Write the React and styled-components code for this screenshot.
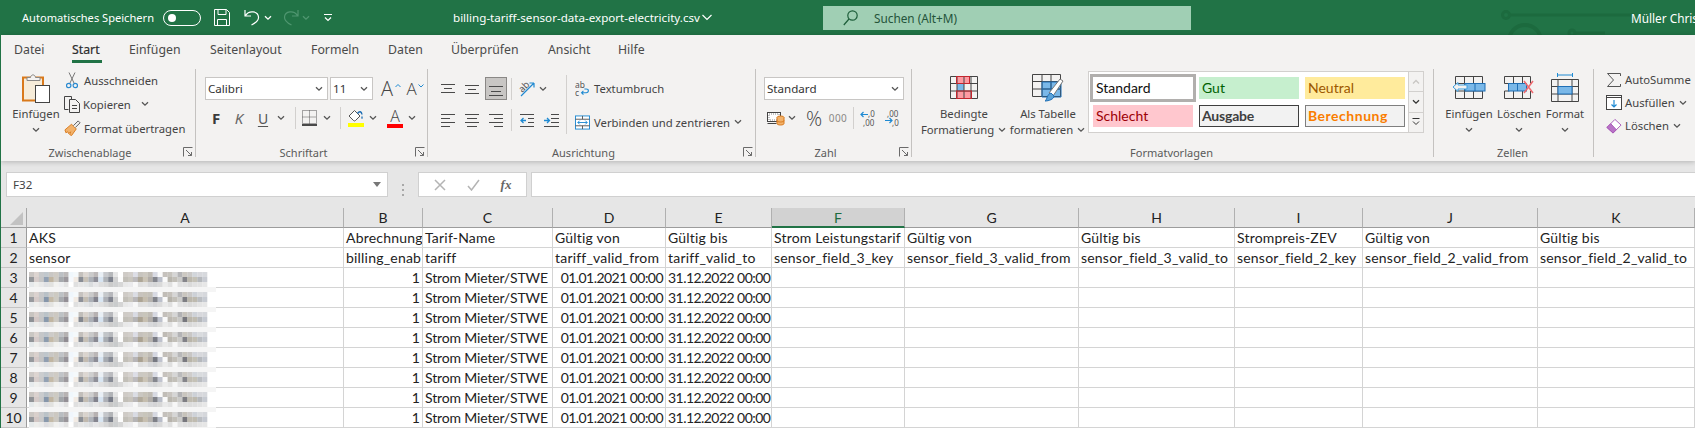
import React from "react";
import styled, { createGlobalStyle } from "styled-components";

const UI_FONT = `"Noto Sans", "Open Sans", sans-serif`;
const CELL_FONT = `Lato, "Liberation Sans", sans-serif`;

const Global = createGlobalStyle`
  html, body { margin: 0; padding: 0; background: #e6e6e6; }
  * { box-sizing: border-box; }
`;

const Page = styled.div`
  width: 1695px;
  height: 428px;
  overflow: hidden;
  border-left: 1px solid #217346;
  font-family: ${UI_FONT};
  font-size: 12px;
  color: #444;
  position: relative;
`;

/* ---------- title bar ---------- */
const TitleBar = styled.div`
  height: 35px;
  margin-left: -1px;
  background: #217346;
  color: #fff;
  display: flex;
  align-items: center;
  position: relative;
  overflow: hidden;
`;
const TitleSlot = styled.div`
  flex: none;
  display: flex;
  align-items: center;
  justify-content: center;
  width: ${(p) => p.$w}px;
  margin-left: ${(p) => p.$ml || 0}px;
`;
const AutoSave = styled.span`
  flex: none;
  width: 134px;
  margin-left: 22px;
  white-space: nowrap;
  font-size: 11.1px;
`;
const Toggle = styled.div`
  flex: none;
  width: 38px;
  height: 16px;
  margin-left: 7px;
  border: 1px solid #fff;
  border-radius: 8px;
  display: flex;
  align-items: center;
  padding-left: 4px;
`;
const Knob = styled.span`
  width: 8px;
  height: 8px;
  border-radius: 50%;
  background: #fff;
`;
const FileName = styled.span`
  flex: none;
  width: 245px;
  margin-left: 120px;
  white-space: nowrap;
  font-size: 11.6px;
`;
const SearchBox = styled.div`
  flex: none;
  width: 368px;
  height: 24px;
  margin-left: 111px;
  background: #a0cfb4;
  color: #24543a;
  display: flex;
  align-items: center;
  gap: 16px;
  padding-left: 20px;
  font-size: 11.8px;
  position: relative;
`;
const UserName = styled.span`
  flex: none;
  margin-left: 440px;
  white-space: nowrap;
  font-size: 11.8px;
  position: relative;
`;
const Circuit = styled.svg`
  position: absolute;
  left: 1495px;
  top: 0;
`;

/* ---------- ribbon ---------- */
const Ribbon = styled.div`
  height: 126px;
  background: #f3f2f1;
  box-shadow: 0 1px 5px rgba(0, 0, 0, 0.22);
  position: relative;
  z-index: 2;
`;
const TabBar = styled.div`
  height: 28px;
  display: flex;
  padding-left: 13px;
`;
const Tab = styled.div`
  flex: none;
  width: ${(p) => p.$w}px;
  height: 28px;
  line-height: 30px;
  font-size: 12.3px;
  color: ${(p) => (p.$active ? "#2d2d2d" : "#4a4a4a")};
  -webkit-text-stroke: ${(p) => (p.$active ? "0.2px #2d2d2d" : "0")};
  position: relative;
`;
const TabMark = styled.span`
  position: absolute;
  left: 0;
  bottom: 0;
  width: 30px;
  height: 3px;
  background: #217346;
`;
const GroupRow = styled.div`
  height: 98px;
  display: flex;
  padding-top: 6px;
`;
const Group = styled.div`
  flex: none;
  width: ${(p) => p.$w}px;
  height: 88px;
  display: flex;
  flex-direction: column;
  border-right: ${(p) => (p.$last ? "none" : "1px solid #c4c2c0")};
`;
const GroupBody = styled.div`
  flex: none;
  height: 75px;
  display: flex;
  padding-left: ${(p) => p.$pl || 0}px;
`;
const GroupFoot = styled.div`
  flex: none;
  height: 16px;
  display: flex;
  align-items: center;
  padding-right: 2px;
`;
const GroupLabel = styled.span`
  flex: 1;
  text-align: center;
  font-size: 11px;
  color: #5a5a5a;
  white-space: nowrap;
`;
const Launcher = styled.svg`
  flex: none;
  margin-left: 4px;
`;

const Stack = styled.div`
  display: flex;
  flex-direction: column;
  flex: none;
  width: ${(p) => (p.$w ? p.$w + "px" : "auto")};
  margin-left: ${(p) => p.$ml || 0}px;
  margin-top: ${(p) => p.$mt || 0}px;
`;
const Rows = styled(Stack)`
  padding-top: 8px;
  gap: 7px;
`;
const ToolRow = styled.div`
  height: ${(p) => p.$h || 22}px;
  padding-top: ${(p) => p.$pt || 0}px;
  display: flex;
  align-items: center;
  justify-content: ${(p) => (p.$spread ? "space-between" : "flex-start")};
`;
const Slot = styled.div`
  flex: none;
  display: flex;
  align-items: center;
  justify-content: center;
  width: ${(p) => p.$w}px;
  margin-left: ${(p) => p.$ml || 0}px;
  color: #444;
`;
const Pressed = styled(Slot)`
  height: 23px;
  background: #c8c6c4;
  border: 1px solid #8a8886;
`;
const ThinSep = styled.div`
  flex: none;
  width: 1px;
  height: 22px;
  margin-left: ${(p) => p.$ml || 0}px;
  background: #d2d0ce;
`;
const WideSep = styled.div`
  flex: none;
  width: 1px;
  height: 59px;
  margin-top: 6px;
  background: #d2d0ce;
`;
const Select = styled.div`
  flex: none;
  width: ${(p) => p.$w}px;
  height: 23px;
  margin-left: ${(p) => p.$ml || 0}px;
  background: #fff;
  border: 1px solid #c8c6c4;
  display: flex;
  align-items: center;
  justify-content: space-between;
  padding: 0 3px 0 2px;
  color: #333;
  font-size: 11.6px;
`;
const SmallAction = styled.div`
  height: ${(p) => p.$h || 24}px;
  display: flex;
  align-items: center;
  gap: ${(p) => p.$gap ?? 3}px;
  white-space: nowrap;
  font-size: 11.3px;
`;
const SmallIcon = styled.div`
  flex: none;
  width: ${(p) => p.$w || 16}px;
  display: flex;
  justify-content: center;
`;
const BigButton = styled.div`
  flex: none;
  width: ${(p) => p.$w}px;
  margin-left: ${(p) => p.$ml || 0}px;
  display: flex;
  flex-direction: column;
  align-items: center;
  white-space: nowrap;
  font-size: 11.3px;
`;
const BigIcon = styled.div`
  height: 37px;
  display: flex;
  align-items: center;
  justify-content: center;
`;
const BigLine = styled.div`
  height: 16px;
  line-height: 16px;
  display: flex;
  align-items: center;
  gap: 3px;
`;

const BoldLetter = styled.span`
  font-family: ${UI_FONT};
  font-weight: 700;
  font-size: 15px;
  color: #3a3a3a;
`;
const ItalicLetter = styled.span`
  font-style: italic;
  font-size: 15px;
  color: #666;
`;
const UnderLetter = styled.span`
  text-decoration: underline;
  text-underline-offset: 2px;
  font-size: 14px;
  color: #555;
`;
const GrowLetter = styled.span`
  font-size: ${(p) => p.$size}px;
  font-weight: 300;
  line-height: 1;
  color: #444;
  font-family: "Open Sans", sans-serif;
`;
const Percent = styled.span`
  font-size: 20px;
  font-family: "Open Sans", sans-serif;
  font-weight: 300;
  color: #444;
`;
const Thousands = styled.span`
  font-size: 10px;
  color: #8a8886;
  letter-spacing: 0.4px;
`;

const Gallery = styled.div`
  flex: none;
  width: 336px;
  height: 62px;
  margin-left: 3px;
  margin-top: 2px;
  background: #fff;
  border: 1px solid #d2d0ce;
  display: flex;
`;
const StyleGrid = styled.div`
  flex: none;
  display: grid;
  grid-template-columns: repeat(3, 100px);
  grid-auto-rows: 22px;
  gap: 6px;
  padding: 5px 0 0 4px;
`;
const StyleCell = styled.div`
  font-family: ${CELL_FONT};
  font-size: 14px;
  line-height: 20px;
  padding-left: 2px;
  white-space: nowrap;
  letter-spacing: ${(p) => p.$ls || 0}px;
  background: ${(p) => p.$bg};
  color: ${(p) => p.$fg};
  font-weight: ${(p) => (p.$bold ? 700 : 400)};
  border: ${(p) => (p.$line ? `1px solid ${p.$line}` : "1px solid transparent")};
  outline: ${(p) => (p.$picked ? "3px solid #b1afad" : "none")};
`;
const GalleryScroll = styled.div`
  flex: none;
  width: 15px;
  margin-left: 3px;
  display: flex;
  flex-direction: column;
`;
const ScrollBtn = styled.div`
  flex: 1;
  display: flex;
  align-items: center;
  justify-content: center;
  border-left: 1px solid #d2d0ce;
  border-top: ${(p) => (p.$first ? "none" : "1px solid #d2d0ce")};
  background: #f3f2f1;
`;

/* ---------- formula bar ---------- */
const FormulaBar = styled.div`
  height: 47px;
  display: flex;
  padding: 11px 0 0 5px;
  background: #e6e6e6;
`;
const NameBox = styled.div`
  flex: none;
  width: 382px;
  height: 25px;
  background: #fff;
  border: 1px solid #d0d0d0;
  display: flex;
  align-items: center;
  justify-content: space-between;
  padding: 0 6px;
  font-size: 11.6px;
  color: #444;
`;
const GripDots = styled.div`
  flex: none;
  width: 30px;
  display: flex;
  justify-content: center;
  align-items: center;
`;
const FxBox = styled.div`
  flex: none;
  width: 109px;
  height: 25px;
  background: #fff;
  border: 1px solid #d0d0d0;
  display: flex;
  align-items: center;
  justify-content: space-around;
  padding: 0 4px;
`;
const FxMark = styled.span`
  font-family: "Liberation Serif", serif;
  font-style: italic;
  font-weight: 700;
  font-size: 13px;
  color: #666;
`;
const FormulaInput = styled.div`
  flex: 1;
  height: 25px;
  margin-left: 4px;
  background: #fff;
  border: 1px solid #d0d0d0;
  border-right: none;
`;

/* ---------- sheet ---------- */
const Sheet = styled.div`
  display: grid;
  grid-template-columns: 26px 317px 79px 130px 113px 106px 133px 174px 156px 128px 175px 157px;
  grid-auto-rows: 20px;
  background: #fff;
  font-family: ${CELL_FONT};
  font-size: 14px;
  color: #222;
`;
const Corner = styled.div`
  background: #e6e6e6;
  border-right: 1px solid #a6a6a6;
  border-bottom: 1px solid #9c9c9c;
  display: flex;
  align-items: flex-end;
  justify-content: flex-end;
  padding: 0 3px 2px 0;
`;
const ColHead = styled.div`
  background: ${(p) => (p.$on ? "#d2d2d2" : "#e6e6e6")};
  color: ${(p) => (p.$on ? "#1d6b40" : "#222")};
  border-right: 1px solid #b0b0b0;
  border-bottom: ${(p) => (p.$on ? "2px solid #217346" : "1px solid #9c9c9c")};
  line-height: 19px;
  text-align: center;
`;
const RowHead = styled.div`
  background: #e6e6e6;
  border-right: 1px solid #9c9c9c;
  border-bottom: 1px solid #c4c4c4;
  line-height: 19px;
  text-align: center;
`;
const Cell = styled.div`
  border-right: 1px solid #d4d4d4;
  border-bottom: 1px solid #d4d4d4;
  line-height: 19px;
  padding: 0 2px;
  white-space: nowrap;
  letter-spacing: ${(p) => p.$ls ?? 0.2}px;
  overflow: ${(p) => (p.$open ? "visible" : "hidden")};
  text-align: ${(p) => (p.$right ? "right" : "left")};
`;
const Mosaic = styled.svg`
  display: block;
  margin-top: 4px;
  overflow: visible;
`;

/* ---------- icons ---------- */
const Chev = ({ color = "#555" }) => (
  <svg width="10" height="6" viewBox="0 0 10 6" fill="none" stroke={color} strokeWidth="1.3">
    <path d="M2 1.2 5 4.2 8 1.2" />
  </svg>
);
const LaunchIcon = () => (
  <Launcher width="10" height="10" viewBox="0 0 10 10" fill="none" stroke="#6a6a6a" strokeWidth="1">
    <path d="M.5 9.5V.5h9M3 3l5.5 5.5M8.5 5v3.500H5" />
  </Launcher>
);
const Lines = ({ rows }) => (
  <svg width="16" height="16" viewBox="0 0 16 16" stroke="#4a4a4a" strokeWidth="1">
    {rows.map(([y, a, b]) => (
      <line key={y} x1={a} x2={b} y1={y} y2={y} />
    ))}
  </svg>
);
const Indent = ({ flip }) => (
  <svg width="15" height="16" viewBox="0 0 15 16" fill="none" stroke="#4a4a4a" strokeWidth="1">
    {flip ? <path d="M7 2.500h8M7 6.500h8M7 10.500h8M0 14.500h15" /> : <path d="M0 2.500h14M8 6.500h6M8 10.500h6M0 14.500h14" />}
    <path stroke="#1f8ad2" strokeWidth="1.300" d={flip ? "M0 8.500h5M3 6l2.500 2.500L3 11" : "M1 8.500h5M3.500 6 1 8.500 3.500 11"} />
  </svg>
);

const ClipboardIcon = () => (
  <svg width="28" height="31" viewBox="0 0 28 31" fill="none">
    <rect x="1" y="5.500" width="20" height="23" fill="#f6ecd9" stroke="#d9791b" strokeWidth="2" />
    <path d="M5 8.500V5.500h3.500C9 2 13 2 13.500 5.500H18v3z" fill="#f3f2f1" stroke="#8a8886" />
    <rect x="13.500" y="13.500" width="14" height="17" fill="#fff" stroke="#444" />
  </svg>
);
const ScissorsIcon = () => (
  <svg width="12" height="17" viewBox="0 0 12 17" fill="none">
    <path stroke="#777" d="M3 .5 8 11M9 .5 4 11" />
    <circle cx="2.700" cy="13.500" r="2.200" stroke="#2b8ad0" strokeWidth="1.200" />
    <circle cx="9.300" cy="13.500" r="2.200" stroke="#2b8ad0" strokeWidth="1.200" />
  </svg>
);
const CopyIcon = () => (
  <svg width="16" height="17" viewBox="0 0 16 17" fill="none" stroke="#444">
    <path d="M4.500 13.500h-4V.5h7v3" />
    <path d="M5.500 3.500h6l4 4v9h-10zM8 9.500h5M8 12.500h5" fill="#f3f2f1" />
  </svg>
);
const BrushIcon = () => (
  <svg width="18" height="18" viewBox="0 0 18 18" fill="none">
    <path d="M1 11 8 5l5 5-5 7-2-1 1-3-2 2-1-2-2 1z" fill="#f2b26b" stroke="#d9791b" />
    <path d="M10 6.500 15 1.500 17 3.500 12 8.500" fill="#f3f2f1" stroke="#555" />
  </svg>
);
const BorderIcon = () => (
  <svg width="15" height="16" viewBox="0 0 15 16" fill="none" stroke="#555" strokeDasharray="1 1">
    <path d="M.5.500h14v13H.5zM7.500.5v13M.5 7h14" />
    <path d="M0 15h15" stroke="#111" strokeWidth="1.500" strokeDasharray="none" />
  </svg>
);
const ColorBar = ({ color }) => (
  <svg width="16" height="4" viewBox="0 0 16 4">
    <rect width="16" height="4" fill={color} />
  </svg>
);
const BucketIcon = () => (
  <svg width="16" height="14" viewBox="0 0 16 14" fill="none">
    <path d="M1 7 6.500 1.500 12 7l-4.500 4.500a1.500 1.500 0 0 1-2 0z" stroke="#555" fill="#fff" />
    <path d="M9.500 4.500c2-3 4-2 4.500 1" stroke="#1f6fb5" strokeWidth="1.400" />
    <path d="M14 6.500l1 3h-2z" fill="#1f6fb5" />
  </svg>
);
const OrientIcon = () => (
  <svg width="17" height="18" viewBox="0 0 17 18" fill="none">
    <text x="0" y="11" fontSize="9.500" fontFamily="Noto Sans" fill="#555" transform="rotate(-45 4 8)">ab</text>
    <path d="M2 16 15 3M15 3h-4.500M15 3v4.500" stroke="#1f8ad2" strokeWidth="1.200" />
  </svg>
);
const WrapIcon = () => (
  <svg width="16" height="17" viewBox="0 0 16 17" fill="none">
    <text x="0" y="8" fontSize="9" fontFamily="Noto Sans" fill="#555">ab</text>
    <text x="0" y="16" fontSize="9" fontFamily="Noto Sans" fill="#555">c</text>
    <path d="M7 13h5c3 0 3-4 0-4h-2M9 11l-2 2 2 2" stroke="#1f8ad2" strokeWidth="1.200" />
  </svg>
);
const MergeIcon = () => (
  <svg width="16" height="15" viewBox="0 0 16 15" fill="none">
    <rect x=".5" y=".5" width="15" height="14" stroke="#1f8ad2" fill="#fff" />
    <path d="M.5 4h15M.5 11h15M8 .5V4M8 11v3.500" stroke="#555" />
    <path d="M3 7.500h10M5 5.500l-2 2 2 2M11 5.500l2 2-2 2" stroke="#1f8ad2" />
  </svg>
);
const CurrencyIcon = () => (
  <svg width="18" height="16" viewBox="0 0 18 16" fill="none">
    <rect x=".5" y="2.500" width="13" height="9" stroke="#444" fill="#fff" />
    <rect x="2" y="4" width="10" height="6" stroke="#888" strokeDasharray="1 1" />
    <path d="M.5 13.500h9" stroke="#444" />
    <ellipse cx="13.500" cy="7.500" rx="3.500" ry="1.500" fill="#f2b26b" stroke="#d9791b" />
    <path d="M10 7.500v6c0 2 7 2 7 0v-6" fill="#f2b26b" stroke="#d9791b" />
    <path d="M10 10.500c0 2 7 2 7 0" stroke="#d9791b" />
  </svg>
);
const DecimalIcon = ({ more }) => (
  <svg width="17" height="17" viewBox="0 0 17 17" fill="none">
    <text x={more ? 3 : 8} y="7" fontSize="8" fontFamily="Noto Sans" fill="#555">{more ? ",00" : ",0"}</text>
    <text x={more ? 8 : 3} y="16" fontSize="8" fontFamily="Noto Sans" fill="#555">{more ? ",0" : ",00"}</text>
    <path
      stroke="#1f8ad2"
      strokeWidth="1.200"
      d={more ? "M1 10.500h7M5.500 8 8 10.500 5.500 13" : "M1 4.500h7M3.500 2 1 4.500 3.500 7"}
    />
  </svg>
);
const CondFormatIcon = () => (
  <svg width="29" height="23" viewBox="0 0 29 23" fill="none">
    <rect x="6.500" y=".5" width="13" height="7" fill="#ff9aa2" />
    <rect x="7" y="7.500" width="7" height="7.500" fill="#7ab8e8" />
    <rect x="6.500" y="15" width="15" height="7.500" fill="#ff9aa2" />
    <path stroke="#444" d="M.5.500h27v22H.5zM.5 7.500h27M.5 15h27M7 .5v22M14 .5v22M21 .5v22" />
    <rect x="6.500" y=".5" width="13" height="7" stroke="#c4262e" />
    <rect x="6.500" y="15" width="15" height="7.500" stroke="#c4262e" />
  </svg>
);
const TableIcon = () => (
  <svg width="32" height="28" viewBox="0 0 32 28" fill="none">
    <rect x="10" y="8" width="19" height="15" fill="#7ab8e8" />
    <path stroke="#444" d="M.5.500h28v22H.5zM.5 7.500h28M.5 15h28M10 .5v22M19 .5v22" />
    <path stroke="#1f6fb5" d="M10 8h19v15H10zM10 15h19M19 8v15" />
    <path d="M17 19 28 5l3 2-10 15z" fill="#fff" stroke="#777" />
    <path d="M13 27c2-1 2-7 6-8l3 3c0 3-5 5-9 5z" fill="#5aa2d8" stroke="#1f6fb5" />
  </svg>
);
const InsertCellIcon = () => (
  <svg width="34" height="23" viewBox="0 0 34 23" fill="none">
    <path stroke="#444" d="M3.500.5h27v22h-27zM3.500 7.500h27M3.500 15h27M12.500.5v22M21.500.5v22" />
    <rect x="13" y="7.500" width="20" height="7.500" fill="#7ab8e8" stroke="#1f6fb5" />
    <path d="M23 7.500V15" stroke="#1f6fb5" />
    <path d="M15 9H6V6.500L1 11l5 4.500V13h9z" fill="#f3f2f1" stroke="#3fa0e0" />
  </svg>
);
const DeleteCellIcon = () => (
  <svg width="30" height="23" viewBox="0 0 30 23" fill="none">
    <path stroke="#444" d="M.5.500h26M.5 22.500h26M.5.500v7M.5 15v7.500M26.500.5v7M26.500 15v7.500M9.500.5v7M18.500.5v7M9.500 15v7.500M18.500 15v7.500M.5 7.500h5M.5 15h5" />
    <rect x="4.500" y="7.500" width="18" height="7.500" fill="#7ab8e8" stroke="#1f6fb5" />
    <path d="M13.500 7.500V15" stroke="#1f6fb5" />
    <path d="M20 5l9 12M29 5l-9 12" stroke="#f0686e" strokeWidth="1.500" />
  </svg>
);
const FormatCellIcon = () => (
  <svg width="29" height="29" viewBox="0 0 29 29" fill="none">
    <path stroke="#1f8ad2" d="M6.500 0v4M21.500 0v4M6.500 2h15" />
    <path stroke="#444" d="M.5 6.500h27v22H.5zM.5 13.500h27M.5 21h27M7 6.500v22M21 6.500v22" />
    <rect x="7" y="13.500" width="14" height="7.500" fill="#7ab8e8" stroke="#1f6fb5" />
  </svg>
);
const SigmaIcon = () => (
  <svg width="14" height="14" viewBox="0 0 14 14" fill="none" stroke="#555">
    <path d="M13.500 3V.5H.5L6.500 7 .5 13.500h13V11" />
  </svg>
);
const FillIcon = () => (
  <svg width="16" height="15" viewBox="0 0 16 15" fill="none">
    <rect x=".5" y=".5" width="15" height="14" stroke="#444" fill="#fff" />
    <path d="M.5 2.500h15" stroke="#444" />
    <path d="M8 5v7M5.500 9.500 8 12l2.500-2.500" stroke="#1f8ad2" strokeWidth="1.200" />
  </svg>
);
const EraserIcon = () => (
  <svg width="17" height="16" viewBox="0 0 17 16" fill="none">
    <path d="M1 9.500 9.500 1l6.500 6-8.500 8.500z" fill="#fff" stroke="#a857b8" />
    <path d="M1 9.500 5 5.500l6 6.500-3.500 3.500z" fill="#b873c6" stroke="#a857b8" />
  </svg>
);

/* ---------- data ---------- */
const TABS = [
  ["Datei", 58], ["Start", 57], ["Einfügen", 81], ["Seitenlayout", 101], ["Formeln", 77],
  ["Daten", 63], ["Überprüfen", 97], ["Ansicht", 70], ["Hilfe", 60],
];
const COLS = ["A", "B", "C", "D", "E", "F", "G", "H", "I", "J", "K"];
const ROW1 = ["AKS", "Abrechnung", "Tarif-Name", "Gültig von", "Gültig bis", "Strom Leistungstarif", "Gültig von", "Gültig bis", "Strompreis-ZEV", "Gültig von", "Gültig bis"];
const ROW2 = ["sensor", "billing_enab", "tariff", "tariff_valid_from", "tariff_valid_to", "sensor_field_3_key", "sensor_field_3_valid_from", "sensor_field_3_valid_to", "sensor_field_2_key", "sensor_field_2_valid_from", "sensor_field_2_valid_to"];
const DATA_ROWS = [3, 4, 5, 6, 7, 8, 9, 10];

// pixelated blur over the sensor names
const BLUR = [
  "c8c4c0 d8cfcb c4c6c8 b8c0c6 c6c4c0 c8c4bc b8bcc0 b4b0b0 eff6fc f4f8fb c0bcb8 d8d2cc c8c8c8 b4afaf e8eef4 bfc2c6 b0b2b6 e4e4e4 ffffff c8c4be d0ccc8 d8dae2 c4c0ba c6c2b8 bcb8b0 d4d6e0 fbfbfb bebab4 c4c0ba d0d0d0 b0b0b2 c6c2ba c8c6c4 ccd0d6 d4d6da d2d4d8",
  "8d9094 d2c6c4 c4c4c4 8494a8 bcb09c c8c4bc a0a4a8 8e8a90 f4f8fc f0e8e0 82868e c0b8ac a8acb4 80808a d4e2f0 a4a8ae 787c88 cccccc fcfcfc bab6ae c6c2ba b4b2b4 a8a090 c4bcac aca8a4 74767e b8bcc8 fafafa b4b0a8 bab6ae c8c8c6 74747a b8b4a8 bcb8ac b0b4b8 c0c4cc",
  "e4e8ea eeeeec e8e8e8 dcdde0 e0e0de f0f0ee ecedef e0e0e0 ffffff dcdcdc e4e4e4 e0e2e4 d8dadc e4e4e6 dcdcdc d4d4d4 c8c8c8 c8cacb d4d4d4 e6e6e6 eaeaec f8f8f8 dedede e0e0e0 d4d6d8 cfd0d2 d8d8d8 e8e8e8 dfdfdf f6f6f6 dfdfdf dcdcdc d8d8d8 dddddd e0e0e0 e4e4e4",
].map((row) => row.split(" ").map((hex) => `#${hex}`));

const BlurredName = ({ seed }) => (
  <Mosaic width="187" height="20" viewBox="0 0 187 20">
    <rect x="0" y="15" width="187" height="5" fill="#f5f5f5" />
    {BLUR.map((row, r) =>
      row.map((fill, i) => (
        <rect
          key={`${r}-${i}`}
          x={i * 4.95}
          y={r * 5}
          width="5.050"
          height="5"
          fill={fill}
          opacity={0.88 + (((i + 1) * (seed + 2) * 7) % 10) / 80}
        />
      ))
    )}
  </Mosaic>
);

const App = () => (
  <Page>
    <Global />
    <TitleBar>
      <Circuit width="200" height="35" viewBox="0 0 200 35" fill="none" stroke="#1c6a3e" strokeWidth="3">
        <circle cx="11" cy="15" r="3.500" />
        <path d="M14 15h126" />
        <circle cx="30" cy="41" r="16" strokeWidth="4" />
        <circle cx="77" cy="33" r="3" />
        <path d="M77 36v4M80 33h30" />
      </Circuit>
      <AutoSave>Automatisches Speichern</AutoSave>
      <Toggle><Knob /></Toggle>
      <TitleSlot $w={16} $ml={13}>
        <svg width="16" height="17" viewBox="0 0 16 17" fill="none" stroke="#fff">
          <path d="M.5.500h12l3 3v13H.5zM4 .5v5h8v-5M3.500 16.500v-6h9v6" />
        </svg>
      </TitleSlot>
      <TitleSlot $w={16} $ml={14}>
        <svg width="16" height="17" viewBox="0 0 16 17" fill="none" stroke="#fff" strokeWidth="1.200">
          <path d="M1 1v6h6M1.500 6.500C5 1 14 2 14.500 8c.3 3-3 6-7 8" />
        </svg>
      </TitleSlot>
      <TitleSlot $w={10} $ml={3}><Chev color="#fff" /></TitleSlot>
      <TitleSlot $w={16} $ml={10}>
        <svg width="16" height="17" viewBox="0 0 16 17" fill="none" stroke="#4f9670" strokeWidth="1.200">
          <path d="M15 1v6H9M14.500 6.500C11 1 2 2 1.500 8c-.3 3 3 6 7 8" />
        </svg>
      </TitleSlot>
      <TitleSlot $w={10} $ml={2}><Chev color="#4f9670" /></TitleSlot>
      <TitleSlot $w={10} $ml={12}>
        <svg width="10" height="8" viewBox="0 0 10 8" fill="none" stroke="#fff">
          <path d="M1 .5h8M2 3.500 5 6.500 8 3.500" strokeWidth="1.200" />
        </svg>
      </TitleSlot>
      <FileName>billing-tariff-sensor-data-export-electricity.csv</FileName>
      <TitleSlot $w={10} $ml={4}>
        <svg width="10" height="7" viewBox="0 0 10 7" fill="none" stroke="#fff" strokeWidth="1.200"><path d="M.5 1 5 5.500 9.500 1" /></svg>
      </TitleSlot>
      <SearchBox>
        <svg width="15" height="16" viewBox="0 0 15 16" fill="none" stroke="#1d5e3a" strokeWidth="1.200">
          <circle cx="9.500" cy="5.500" r="4.700" />
          <path d="M6 9 .8 15" />
        </svg>
        Suchen (Alt+M)
      </SearchBox>
      <UserName>Müller Chris</UserName>
    </TitleBar>

    <Ribbon>
      <TabBar>
        {TABS.map(([name, w]) => (
          <Tab key={name} $w={w} $active={name === "Start"}>
            {name}
            {name === "Start" && <TabMark />}
          </Tab>
        ))}
      </TabBar>
      <GroupRow>
        <Group $w={195}>
          <GroupBody $pl={7}>
            <BigButton $w={56}>
              <BigIcon><ClipboardIcon /></BigIcon>
              <BigLine>Einfügen</BigLine>
              <BigLine><Chev /></BigLine>
            </BigButton>
            <Stack $mt={-1}>
              <SmallAction $gap={4}>
                <SmallIcon><ScissorsIcon /></SmallIcon>Ausschneiden
              </SmallAction>
              <SmallAction $gap={3}>
                <SmallIcon><CopyIcon /></SmallIcon>Kopieren<Slot $w={10} $ml={6}><Chev /></Slot>
              </SmallAction>
              <SmallAction $gap={3}>
                <SmallIcon $w={17}><BrushIcon /></SmallIcon>Format übertragen
              </SmallAction>
            </Stack>
          </GroupBody>
          <GroupFoot><GroupLabel>Zwischenablage</GroupLabel><LaunchIcon /></GroupFoot>
        </Group>

        <Group $w={232}>
          <GroupBody $pl={9}>
            <Rows>
              <ToolRow $h={23}>
                <Select $w={123}>Calibri<Chev /></Select>
                <Select $w={43} $ml={2}>11<Chev /></Select>
                <Slot $w={16} $ml={6}><GrowLetter $size={20}>A</GrowLetter></Slot>
                <Slot $w={6}>
                  <svg width="6" height="12" viewBox="0 0 6 12" fill="none" stroke="#1f8ad2"><path d="M.5 4 3 1.500 5.500 4" /></svg>
                </Slot>
                <Slot $w={13} $ml={4}><GrowLetter $size={17}>A</GrowLetter></Slot>
                <Slot $w={6}>
                  <svg width="6" height="12" viewBox="0 0 6 12" fill="none" stroke="#1f8ad2"><path d="M.5 1.500 3 4 5.500 1.500" /></svg>
                </Slot>
              </ToolRow>
              <ToolRow>
                <Slot $w={22}><BoldLetter>F</BoldLetter></Slot>
                <Slot $w={24}><ItalicLetter>K</ItalicLetter></Slot>
                <Slot $w={24}><UnderLetter>U</UnderLetter></Slot>
                <Slot $w={12}><Chev /></Slot>
                <ThinSep $ml={8} />
                <Slot $w={15} $ml={6}><BorderIcon /></Slot>
                <Slot $w={10} $ml={5}><Chev /></Slot>
                <ThinSep $ml={8} />
                <Stack $ml={7} $w={16}><BucketIcon /><ColorBar color="#ffff00" /></Stack>
                <Slot $w={10} $ml={4}><Chev /></Slot>
                <Stack $ml={9} $w={16}>
                  <Slot $w={16}><GrowLetter $size={16}>A</GrowLetter></Slot>
                  <ColorBar color="#ff0000" />
                </Stack>
                <Slot $w={10} $ml={4}><Chev /></Slot>
              </ToolRow>
            </Rows>
          </GroupBody>
          <GroupFoot><GroupLabel>Schriftart</GroupLabel><LaunchIcon /></GroupFoot>
        </Group>

        <Group $w={328}>
          <GroupBody $pl={12}>
            <Rows $w={126}>
              <ToolRow $h={23}>
                <Slot $w={16}><Lines rows={[[3.5, 1, 15], [7.5, 4, 12], [11.5, 1, 15]]} /></Slot>
                <Slot $w={16} $ml={8}><Lines rows={[[4.5, 1, 15], [8.5, 4, 12], [12.5, 1, 15]]} /></Slot>
                <Pressed $w={22} $ml={5}><Lines rows={[[5.5, 1, 15], [10.5, 3, 13], [14.5, 1, 15]]} /></Pressed>
                <ThinSep $ml={4} />
                <Slot $w={17} $ml={7}><OrientIcon /></Slot>
                <Slot $w={10} $ml={2}><Chev /></Slot>
              </ToolRow>
              <ToolRow $h={24} $pt={2}>
                <Slot $w={16}><Lines rows={[[2.5, 1, 15], [6.5, 1, 10], [10.5, 1, 15], [14.5, 1, 10]]} /></Slot>
                <Slot $w={16} $ml={8}><Lines rows={[[2.5, 1, 15], [6.5, 3, 13], [10.5, 1, 15], [14.5, 3, 13]]} /></Slot>
                <Slot $w={16} $ml={8}><Lines rows={[[2.5, 1, 15], [6.5, 6, 15], [10.5, 1, 15], [14.5, 6, 15]]} /></Slot>
                <ThinSep $ml={7} />
                <Slot $w={15} $ml={8}><Indent /></Slot>
                <Slot $w={15} $ml={9}><Indent flip /></Slot>
              </ToolRow>
            </Rows>
            <WideSep />
            <Rows $w={168} $ml={8}>
              <ToolRow $h={23}>
                <SmallAction $h={23} $gap={4}><SmallIcon $w={15}><WrapIcon /></SmallIcon>Textumbruch</SmallAction>
              </ToolRow>
              <ToolRow $spread $h={26} $pt={4}>
                <SmallAction $h={22} $gap={4}><SmallIcon $w={15}><MergeIcon /></SmallIcon>Verbinden und zentrieren</SmallAction>
                <Slot $w={10}><Chev /></Slot>
              </ToolRow>
            </Rows>
          </GroupBody>
          <GroupFoot><GroupLabel>Ausrichtung</GroupLabel><LaunchIcon /></GroupFoot>
        </Group>

        <Group $w={156}>
          <GroupBody $pl={8}>
            <Rows>
              <ToolRow $h={23}><Select $w={140}>Standard<Chev /></Select></ToolRow>
              <ToolRow>
                <Slot $w={18} $ml={3}><CurrencyIcon /></Slot>
                <Slot $w={10} $ml={2}><Chev /></Slot>
                <Slot $w={16} $ml={9}><Percent>%</Percent></Slot>
                <Slot $w={18} $ml={7}><Thousands>000</Thousands></Slot>
                <ThinSep $ml={6} />
                <Slot $w={17} $ml={6}><DecimalIcon /></Slot>
                <Slot $w={17} $ml={7}><DecimalIcon more /></Slot>
              </ToolRow>
            </Rows>
          </GroupBody>
          <GroupFoot><GroupLabel>Zahl</GroupLabel><LaunchIcon /></GroupFoot>
        </Group>

        <Group $w={522}>
          <GroupBody $pl={6}>
            <BigButton $w={92}>
              <BigIcon><CondFormatIcon /></BigIcon>
              <BigLine>Bedingte</BigLine>
              <BigLine>Formatierung<Chev /></BigLine>
            </BigButton>
            <BigButton $w={74} $ml={1}>
              <BigIcon><TableIcon /></BigIcon>
              <BigLine>Als Tabelle</BigLine>
              <BigLine>formatieren<Chev /></BigLine>
            </BigButton>
            <Gallery>
              <StyleGrid>
                <StyleCell $bg="#fff" $fg="#111" $picked>Standard</StyleCell>
                <StyleCell $bg="#c6efce" $fg="#006100">Gut</StyleCell>
                <StyleCell $bg="#ffeb9c" $fg="#9c5700">Neutral</StyleCell>
                <StyleCell $bg="#ffc7ce" $fg="#9c0006">Schlecht</StyleCell>
                <StyleCell $bg="#f2f2f2" $fg="#3f3f3f" $line="#3f3f3f" $bold $ls={-0.2}>Ausgabe</StyleCell>
                <StyleCell $bg="#f2f2f2" $fg="#fa7d00" $line="#7f7f7f" $bold $ls={0.5}>Berechnung</StyleCell>
              </StyleGrid>
              <GalleryScroll>
                <ScrollBtn $first>
                  <svg width="10" height="6" viewBox="0 0 10 6" fill="none" stroke="#c8c6c4" strokeWidth="1.300"><path d="M2 4.500 5 1.500 8 4.500" /></svg>
                </ScrollBtn>
                <ScrollBtn><Chev color="#333" /></ScrollBtn>
                <ScrollBtn>
                  <svg width="10" height="8" viewBox="0 0 10 8" fill="none" stroke="#333"><path d="M1.500.5h7M2 3.500 5 6.500 8 3.500" /></svg>
                </ScrollBtn>
              </GalleryScroll>
            </Gallery>
          </GroupBody>
          <GroupFoot><GroupLabel>Formatvorlagen</GroupLabel></GroupFoot>
        </Group>

        <Group $w={160}>
          <GroupBody $pl={11}>
            <BigButton $w={48}>
              <BigIcon><InsertCellIcon /></BigIcon>
              <BigLine>Einfügen</BigLine>
              <BigLine><Chev /></BigLine>
            </BigButton>
            <BigButton $w={46} $ml={3}>
              <BigIcon><DeleteCellIcon /></BigIcon>
              <BigLine>Löschen</BigLine>
              <BigLine><Chev /></BigLine>
            </BigButton>
            <BigButton $w={46}>
              <BigIcon><FormatCellIcon /></BigIcon>
              <BigLine>Format</BigLine>
              <BigLine><Chev /></BigLine>
            </BigButton>
          </GroupBody>
          <GroupFoot><GroupLabel>Zellen</GroupLabel></GroupFoot>
        </Group>

        <Group $w={102} $last>
          <GroupBody $pl={12}>
            <Stack $mt={-1}>
              <SmallAction $h={23}><SmallIcon><SigmaIcon /></SmallIcon>AutoSumme</SmallAction>
              <SmallAction $h={23}><SmallIcon><FillIcon /></SmallIcon>Ausfüllen<Chev /></SmallAction>
              <SmallAction $h={23}><SmallIcon><EraserIcon /></SmallIcon>Löschen<Chev /></SmallAction>
            </Stack>
          </GroupBody>
        </Group>
      </GroupRow>
    </Ribbon>

    <FormulaBar>
      <NameBox>
        F32
        <svg width="8" height="5" viewBox="0 0 8 5"><path d="M0 0h8L4 5z" fill="#777" /></svg>
      </NameBox>
      <GripDots>
        <svg width="3" height="13" viewBox="0 0 3 13" fill="#a8a8a8">
          <rect y="0" width="2" height="2" /><rect y="5" width="2" height="2" /><rect y="10" width="2" height="2" />
        </svg>
      </GripDots>
      <FxBox>
        <svg width="12" height="12" viewBox="0 0 12 12" stroke="#b4b4b4" strokeWidth="1.500"><path d="M1 1l10 10M11 1 1 11" /></svg>
        <svg width="13" height="12" viewBox="0 0 13 12" fill="none" stroke="#b4b4b4" strokeWidth="1.500"><path d="M1 7l3.500 4L12 1" /></svg>
        <FxMark>fx</FxMark>
      </FxBox>
      <FormulaInput />
    </FormulaBar>

    <Sheet>
      <Corner>
        <svg width="13" height="13" viewBox="0 0 13 13"><path d="M13 0v13H0z" fill="#c2c2c2" /></svg>
      </Corner>
      {COLS.map((c) => (
        <ColHead key={c} $on={c === "F"}>{c}</ColHead>
      ))}

      <RowHead>1</RowHead>
      {ROW1.map((t, i) => <Cell key={i}>{t}</Cell>)}
      <RowHead>2</RowHead>
      {ROW2.map((t, i) => <Cell key={i}>{t}</Cell>)}

      {DATA_ROWS.map((n) => (
        <React.Fragment key={n}>
          <RowHead>{n}</RowHead>
          <Cell $open><BlurredName seed={n} /></Cell>
          <Cell $right>1</Cell>
          <Cell $ls={-0.15}>Strom Mieter/STWE</Cell>
          <Cell $right $ls={-0.55}>01.01.2021 00:00</Cell>
          <Cell $right $ls={-0.55}>31.12.2022 00:00</Cell>
          {COLS.slice(5).map((c) => <Cell key={c} />)}
        </React.Fragment>
      ))}
    </Sheet>
  </Page>
);

export default App;
